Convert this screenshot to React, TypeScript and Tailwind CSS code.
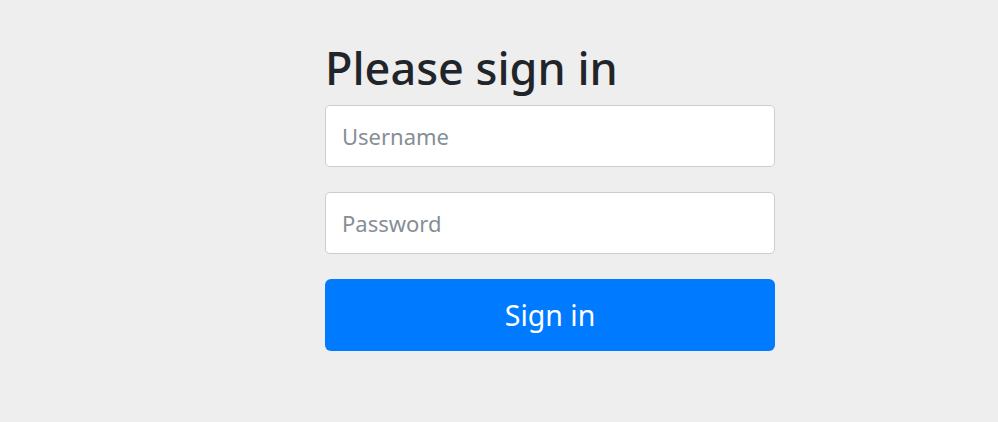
import React from 'react';

const App: React.FC = () => {
  return (
    <div className="min-h-screen w-full bg-[#eeeeee] font-['Noto_Sans','Open_Sans',sans-serif]">
      <div className="ml-[325px] w-[450px] pt-[36px]">
        <form className="flex flex-col" onSubmit={(e) => e.preventDefault()}>
          <h2 className="mb-[5px] text-[45px] font-medium leading-[64px] text-[#212529]">Please sign in</h2>
          <input
            type="text"
            placeholder="Username"
            className="h-[62px] w-full rounded-[5px] border border-[#cdcdcd] bg-white px-[16px] text-[22px] text-[#495057] placeholder:text-[#868e96] outline-none"
          />
          <input
            type="password"
            placeholder="Password"
            className="mt-[25px] h-[62px] w-full rounded-[5px] border border-[#cdcdcd] bg-white px-[16px] text-[22px] text-[#495057] placeholder:text-[#868e96] outline-none"
          />
          <button
            type="submit"
            className="mt-[25px] h-[72px] w-full rounded-[6px] bg-[#007bff] text-[28.5px] text-white"
          >
            Sign in
          </button>
        </form>
      </div>
    </div>
  );
};

export default App;
